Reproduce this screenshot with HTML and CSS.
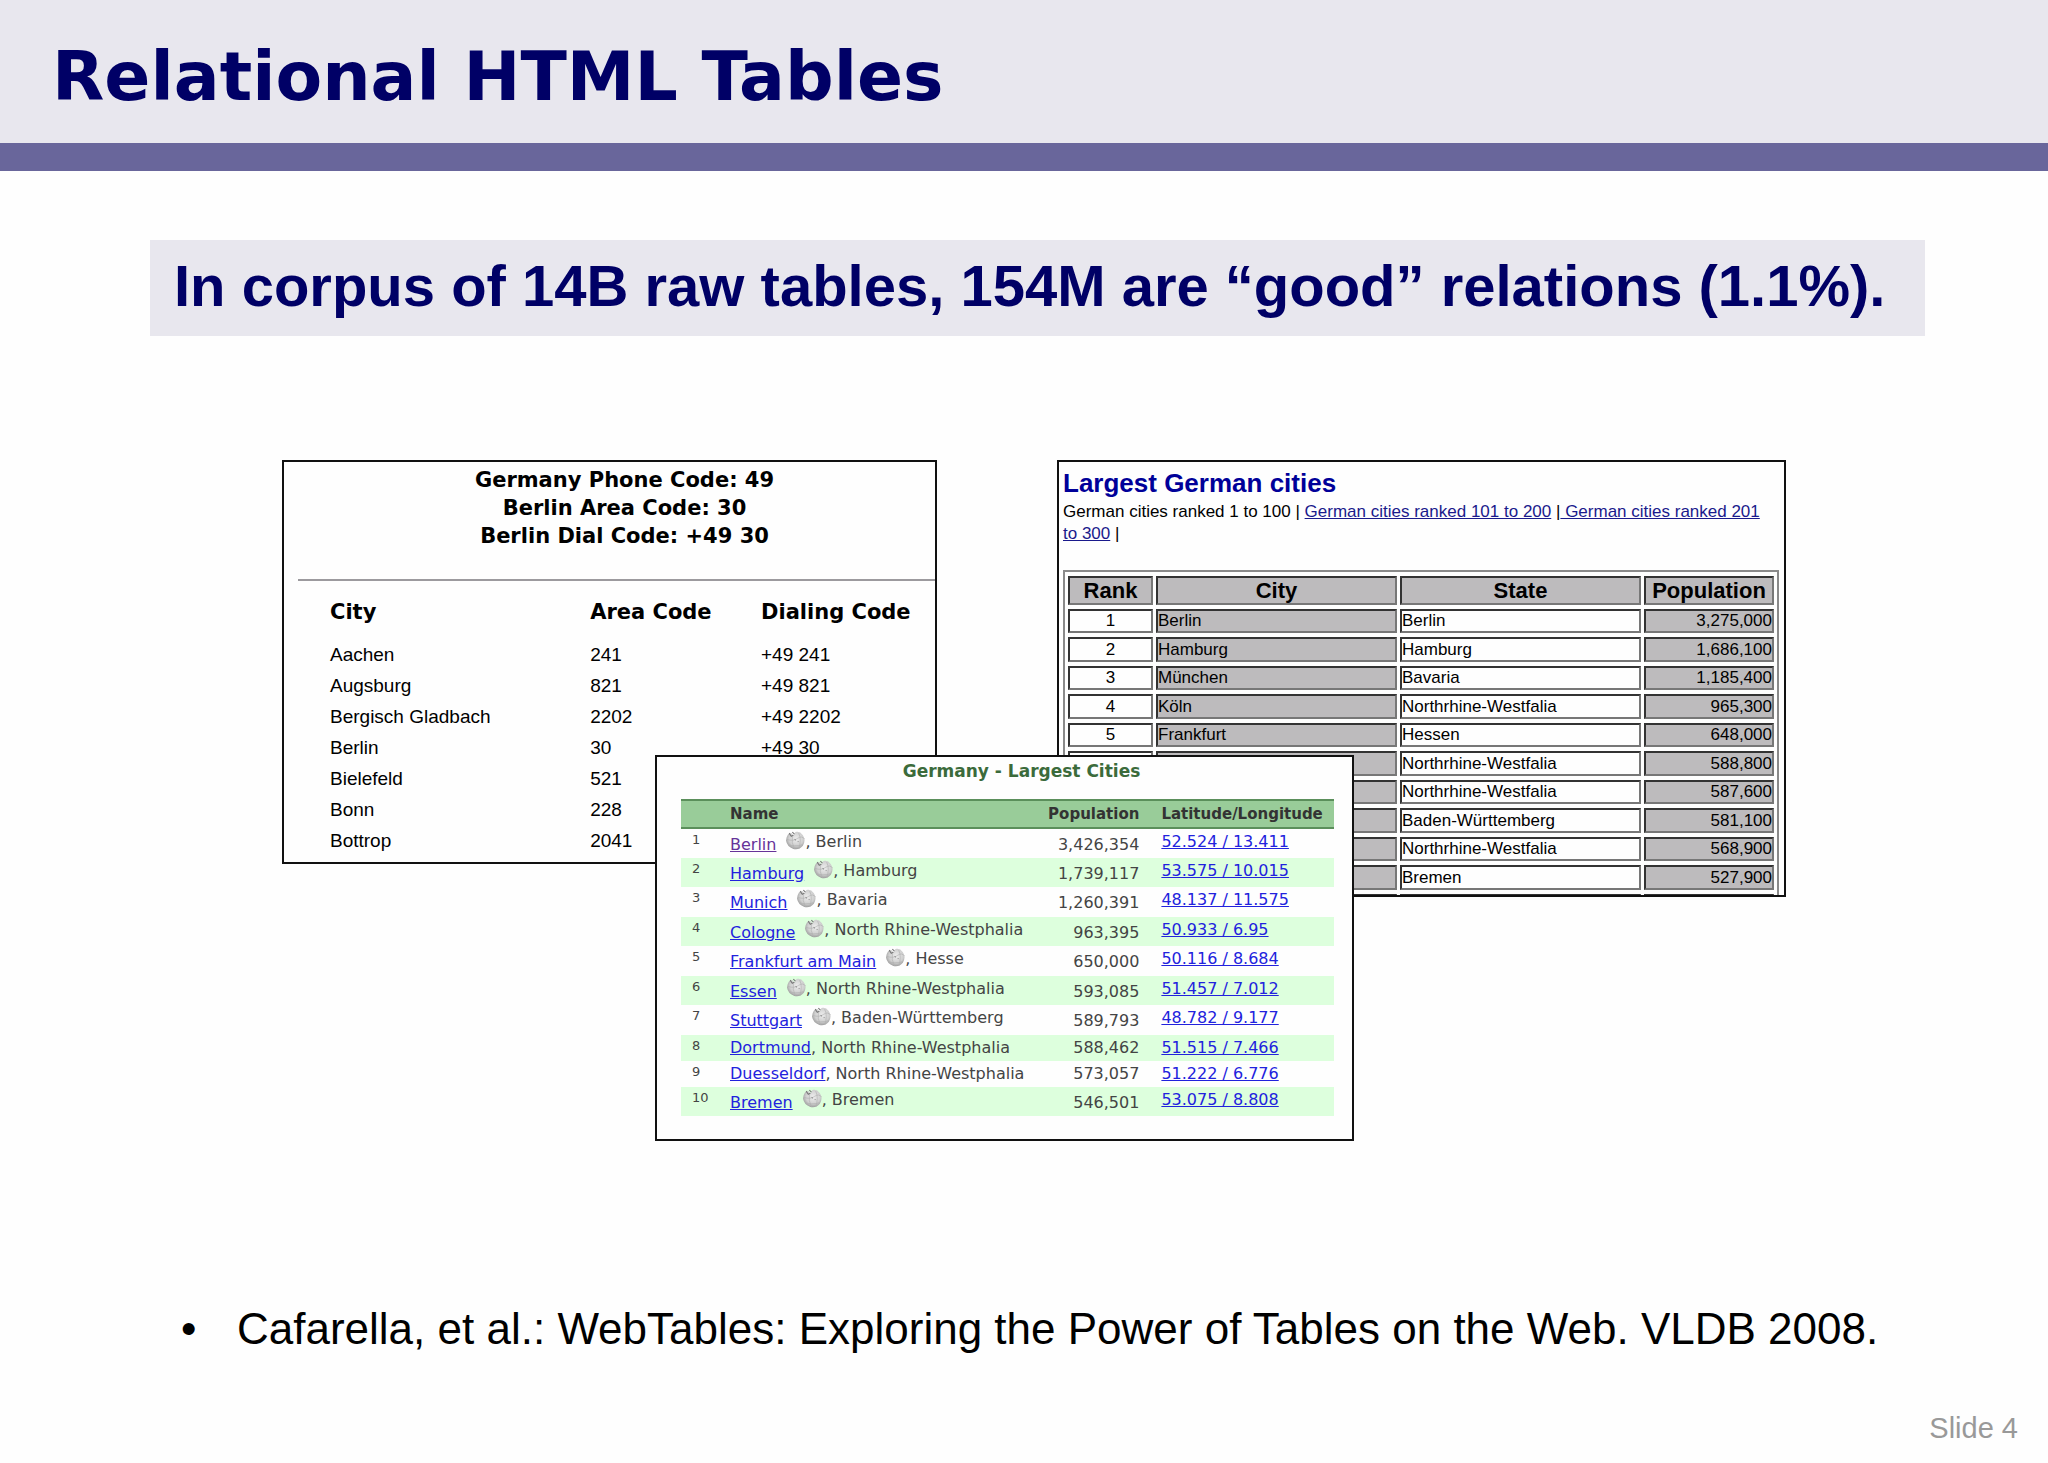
FILE: index.html
```html
<!doctype html>
<html lang="en">
<head>
  <meta charset="utf-8">
  <title>Relational HTML Tables</title>
  <link rel="stylesheet" href="styles.css">
</head>
<body>
  <svg class="defs" aria-hidden="true">
    <defs>
      <radialGradient id="ball" cx="55%" cy="40%" r="65%">
        <stop offset="0" stop-color="#ededed"/>
        <stop offset="0.6" stop-color="#cfcfcf"/>
        <stop offset="1" stop-color="#909090"/>
      </radialGradient>
    </defs>
    <symbol id="globe" viewBox="1 1 18 18">
      <path d="M3 4 L6 3 L8 5 L10 2 Q14 1 17 5 Q20 10 17 15 Q13 19.500 8 18 Q2 16 1 10 Q1 7 3 4Z" fill="url(#ball)"/>
      <path d="M4 3 L6 6 L8 5 M7 2 L9 4" stroke="#777" stroke-width="1" fill="none"/>
      <path d="M2 9 Q8 11 12 8 T19 9 M3 14 Q9 16 17 14 M7 6 Q6 12 9 18 M13 3 Q16 9 13 18" stroke="#b0b0b0" stroke-width="0.600" fill="none"/>
      <path d="M9 9 h1 v1 M12 11 h1" stroke="#888" stroke-width="0.800" fill="none"/>
    </symbol>
  </svg>

  <header class="top">
    <h1>Relational HTML Tables</h1>
  </header>

  <main>
    <p class="banner">In corpus of 14B raw tables, 154M are “good” relations (1.1%).</p>

    <div class="stage">
      <section class="panel phone">
        <h2>Germany Phone Code: 49<br>Berlin Area Code: 30<br>Berlin Dial Code: +49 30</h2>
        <hr>
        <table>
          <thead>
            <tr><th>City</th><th>Area Code</th><th>Dialing Code</th></tr>
          </thead>
          <tbody>
            <tr><td>Aachen</td><td>241</td><td>+49 241</td></tr>
            <tr><td>Augsburg</td><td>821</td><td>+49 821</td></tr>
            <tr><td>Bergisch Gladbach</td><td>2202</td><td>+49 2202</td></tr>
            <tr><td>Berlin</td><td>30</td><td>+49 30</td></tr>
            <tr><td>Bielefeld</td><td>521</td><td></td></tr>
            <tr><td>Bonn</td><td>228</td><td></td></tr>
            <tr><td>Bottrop</td><td>2041</td><td></td></tr>
          </tbody>
        </table>
      </section>

      <section class="panel ranking">
        <h2>Largest German cities</h2>
        <p>German cities ranked 1 to 100 | <a href="#">German cities ranked 101 to 200</a> |<a href="#"> German cities ranked 201<br>to 300</a> |</p>
        <table>
          <thead>
            <tr><th class="rank">Rank</th><th>City</th><th>State</th><th class="pop">Population</th></tr>
          </thead>
          <tbody>
            <tr><td>1</td><td>Berlin</td><td>Berlin</td><td>3,275,000</td></tr>
            <tr><td>2</td><td>Hamburg</td><td>Hamburg</td><td>1,686,100</td></tr>
            <tr><td>3</td><td>München</td><td>Bavaria</td><td>1,185,400</td></tr>
            <tr><td>4</td><td>Köln</td><td>Northrhine-Westfalia</td><td>965,300</td></tr>
            <tr><td>5</td><td>Frankfurt</td><td>Hessen</td><td>648,000</td></tr>
            <tr><td></td><td></td><td>Northrhine-Westfalia</td><td>588,800</td></tr>
            <tr><td></td><td></td><td>Northrhine-Westfalia</td><td>587,600</td></tr>
            <tr><td></td><td></td><td>Baden-Württemberg</td><td>581,100</td></tr>
            <tr><td></td><td></td><td>Northrhine-Westfalia</td><td>568,900</td></tr>
            <tr><td></td><td></td><td>Bremen</td><td>527,900</td></tr>
            <tr><td></td><td></td><td></td><td></td></tr>
          </tbody>
        </table>
      </section>

      <section class="panel largest">
        <h2>Germany - Largest Cities</h2>
        <table>
          <thead>
            <tr><th class="num"></th><th class="name">Name</th><th class="people">Population</th><th>Latitude/Longitude</th></tr>
          </thead>
          <tbody>
            <tr><td>1</td><td><a class="visited" href="#">Berlin</a><svg class="globe"><use href="#globe"/></svg>, Berlin</td><td>3,426,354</td><td><a href="#">52.524 / 13.411</a></td></tr>
            <tr><td>2</td><td><a href="#">Hamburg</a><svg class="globe"><use href="#globe"/></svg>, Hamburg</td><td>1,739,117</td><td><a href="#">53.575 / 10.015</a></td></tr>
            <tr><td>3</td><td><a href="#">Munich</a><svg class="globe"><use href="#globe"/></svg>, Bavaria</td><td>1,260,391</td><td><a href="#">48.137 / 11.575</a></td></tr>
            <tr><td>4</td><td><a href="#">Cologne</a><svg class="globe"><use href="#globe"/></svg>, North Rhine-Westphalia</td><td>963,395</td><td><a href="#">50.933 / 6.95</a></td></tr>
            <tr><td>5</td><td><a href="#">Frankfurt am Main</a><svg class="globe"><use href="#globe"/></svg>, Hesse</td><td>650,000</td><td><a href="#">50.116 / 8.684</a></td></tr>
            <tr><td>6</td><td><a href="#">Essen</a><svg class="globe"><use href="#globe"/></svg>, North Rhine-Westphalia</td><td>593,085</td><td><a href="#">51.457 / 7.012</a></td></tr>
            <tr><td>7</td><td><a href="#">Stuttgart</a><svg class="globe"><use href="#globe"/></svg>, Baden-Württemberg</td><td>589,793</td><td><a href="#">48.782 / 9.177</a></td></tr>
            <tr class="plain"><td>8</td><td><a href="#">Dortmund</a>, North Rhine-Westphalia</td><td>588,462</td><td><a href="#">51.515 / 7.466</a></td></tr>
            <tr class="plain"><td>9</td><td><a href="#">Duesseldorf</a>, North Rhine-Westphalia</td><td>573,057</td><td><a href="#">51.222 / 6.776</a></td></tr>
            <tr><td>10</td><td><a href="#">Bremen</a><svg class="globe"><use href="#globe"/></svg>, Bremen</td><td>546,501</td><td><a href="#">53.075 / 8.808</a></td></tr>
          </tbody>
        </table>
      </section>
    </div>

    <ul class="sources">
      <li>Cafarella, et al.: WebTables: Exploring the Power of Tables on the Web. VLDB 2008.</li>
    </ul>
  </main>

  <footer>Slide 4</footer>
</body>
</html>
```
FILE: styles.css
```css
* {
  box-sizing: border-box;
}

body {
  margin: 0;
  min-height: 100vh;
  display: flex;
  flex-direction: column;
  background-color: #fefefe;
  font-family: "Liberation Sans", Arial, sans-serif;
  color: #000;
}

h1, h2, p, ul {
  margin: 0;
}

.defs {
  position: absolute;
  width: 0;
  height: 0;
}

/* slide header */
.top {
  padding: 37px 52px 26px;
  background-color: #e8e7ee;
  border-bottom: 28px solid #69669b;
}

.top h1 {
  font-family: "DejaVu Sans", Verdana, sans-serif;
  font-size: 68px;
  line-height: 80px;
  color: #000066;
}

.banner {
  margin: 69px 6% 0 150px;
  padding: 0 24px 4px;
  background-color: #e8e7ee;
  font-size: 58px;
  font-weight: bold;
  line-height: 92px;
  color: #000066;
  white-space: nowrap;
}

/* the three panels share one grid so that they can overlap */
.stage {
  display: grid;
  grid-template-columns: 282fr 373fr 282fr 120fr 297fr 432fr 262fr;
  align-items: start;
  margin-top: 124px;
}

.panel {
  grid-row: 1;
  min-width: 0;
  overflow: hidden;
  border: 2px solid #111;
  background-color: #fefefe;
  white-space: nowrap;
}

.panel table {
  table-layout: fixed;
}

/* phone codes */
.phone {
  grid-column: 2 / 4;
  height: 404px;
  padding-left: 14px;
}

.phone h2 {
  padding: 4px 0 0 16px;
  font-family: "DejaVu Sans", Verdana, sans-serif;
  font-size: 21px;
  line-height: 28px;
  text-align: center;
}

.phone hr {
  height: 2px;
  margin: 29px 0 12px;
  border: 0;
  background-color: #9c9a9e;
}

.phone table {
  width: 100%;
  padding-left: 32px;
  border-spacing: 0;
  font-size: 19px;
  line-height: 31px;
}

.phone th {
  height: 46px;
  padding: 0 0 8px;
  font-family: "DejaVu Sans", Verdana, sans-serif;
  font-size: 21px;
  text-align: left;
}

.phone th:nth-child(1) {
  width: 43%;
}

.phone th:nth-child(3) {
  width: 174px;
}

.phone td {
  height: 31px;
  padding: 0;
}

/* ranked cities */
.ranking {
  grid-column: 5 / 7;
  height: 437px;
  padding: 5px 5px 0 4px;
}

.ranking h2 {
  font-size: 26px;
  line-height: 32px;
  color: #000099;
}

.ranking p {
  margin-top: 2px;
  margin-bottom: 25px;
  font-size: 17px;
  line-height: 22px;
}

.ranking a {
  color: #1a1a8c;
}

.ranking table {
  width: 100%;
  border: 2px solid #8a8a8a;
  border-spacing: 3px 4px;
  font-size: 17px;
  line-height: 20px;
}

.ranking th,
.ranking td {
  padding: 0;
  border: 2px solid #333;
  border-right-color: #777;
  border-bottom-color: #777;
}

.ranking th {
  height: 29px;
  background-color: #bdbbbd;
  font-size: 22px;
}

.ranking .rank {
  width: 85px;
}

.ranking .pop {
  width: 130px;
}

.ranking td {
  height: 24px;
}

.ranking tr:nth-child(even) td {
  height: 25px;
}

.ranking td:nth-child(1) {
  text-align: center;
}

.ranking td:nth-child(2),
.ranking td:nth-child(4) {
  background-color: #bdbbbd;
}

.ranking td:nth-child(4) {
  text-align: right;
}

/* largest cities, on top of the other two */
.largest {
  grid-column: 3 / 6;
  height: 386px;
  margin-top: 295px;
  padding: 1px 18px 0 24px;
  font-family: "DejaVu Sans", Verdana, sans-serif;
  color: #444;
}

.largest h2 {
  padding: 0 0 15px 28px;
  font-size: 17px;
  line-height: 26px;
  text-align: center;
  color: #3b6b3b;
}

.largest table {
  width: 100%;
  border-collapse: collapse;
  font-size: 16px;
  line-height: 22px;
}

.largest th {
  height: 28px;
  padding: 0;
  border-top: 2px solid #5b8f5b;
  border-bottom: 2px solid #5b8f5b;
  background-color: #99cc99;
  font-size: 15px;
  text-align: left;
  color: #333;
}

.largest .num {
  width: 49px;
}

.largest .name {
  width: 46%;
}

.largest .people {
  width: 109px;
}

.largest td {
  height: 29px;
  padding: 2px 0 0;
  vertical-align: top;
}

.largest tr:nth-child(odd) td {
  height: 30px;
}

.largest tr.plain td {
  height: 26px;
}

.largest tbody tr:nth-child(even) {
  background-color: #ddffdd;
}

.largest td:nth-child(1) {
  padding-top: 0;
  padding-left: 11px;
  font-size: 13px;
}

.largest th:nth-child(3),
.largest td:nth-child(3) {
  text-align: right;
}

.largest th:nth-child(4),
.largest td:nth-child(4) {
  padding-left: 22px;
}

.largest td:nth-child(3) {
  padding-top: 5px;
}

.largest .plain td:nth-child(3) {
  padding-top: 2px;
}

.largest a {
  color: #2222dd;
}

.largest td:nth-child(2) a {
  vertical-align: -3px;
}

.largest .plain td:nth-child(2) a {
  vertical-align: baseline;
}

.largest a.visited {
  color: #663399;
}

.globe {
  width: 19px;
  height: 19px;
  margin-left: 10px;
  vertical-align: -3px;
}

/* reference and slide number */
.sources {
  margin-top: 162px;
  padding-left: 237px;
  font-size: 44px;
  line-height: 52px;
  list-style: none;
  white-space: nowrap;
}

.sources li::before {
  content: "•";
  display: inline-block;
  width: 56px;
  margin-left: -56px;
}

footer {
  margin-top: auto;
  padding: 0 30px 18px;
  font-size: 29px;
  line-height: 34px;
  text-align: right;
  color: #999;
}
```
